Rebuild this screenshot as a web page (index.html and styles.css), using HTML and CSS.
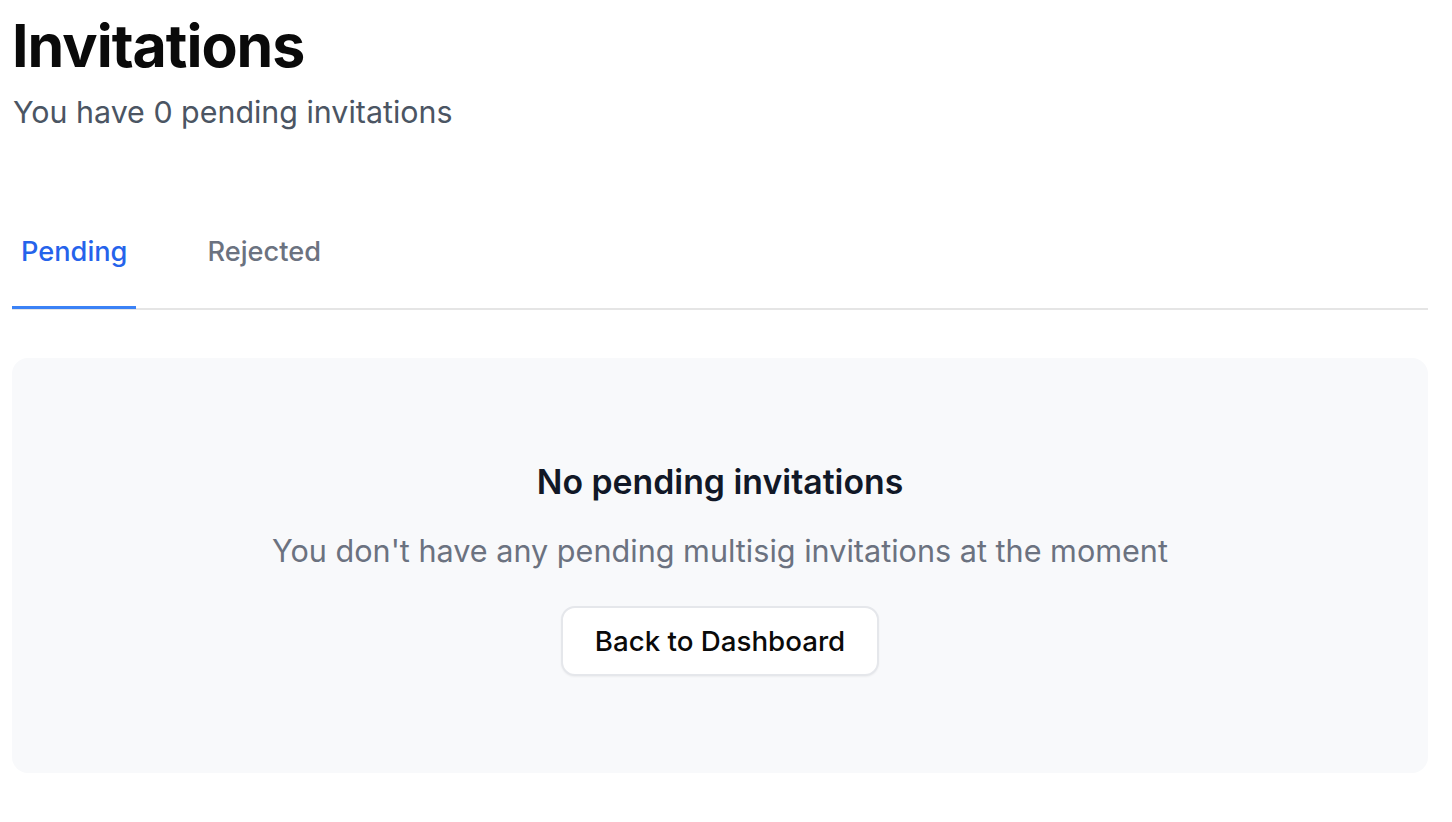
FILE: index.html
```html
<!DOCTYPE html>
<html lang="en">
<head>
<meta charset="utf-8">
<title>Invitations</title>
<link rel="stylesheet" href="styles.css">
</head>
<body>
<main class="page">
  <header class="page-header">
    <h1 class="title">Invitations</h1>
    <p class="subtitle">You have 0 pending invitations</p>
  </header>
  <nav class="tabs">
    <button class="tab tab-active">Pending</button>
    <button class="tab">Rejected</button>
  </nav>
  <section class="empty">
    <h2 class="empty-title">No pending invitations</h2>
    <p class="empty-text">You don't have any pending multisig invitations at the moment</p>
    <button class="btn">Back to Dashboard</button>
  </section>
</main>
</body>
</html>
```
FILE: styles.css
```css
* { box-sizing: border-box; }
html, body { margin: 0; padding: 0; background: #ffffff; }
body { font-family: Inter, "Noto Sans", sans-serif; color: #0a0a0a; }
.page { padding: 0 24px 0 12px; }
.page-header { padding-top: 14px; }
.title { margin: 0; font-size: 59px; font-weight: 700; line-height: 64px; letter-spacing: -1px; color: #0a0a0a; }
.subtitle { margin: 14px 0 0 1px; font-size: 30.4px; line-height: 40px; color: #4b5563; }
.tabs { display: flex; margin-top: 100px; border-bottom: 2px solid #e5e5e5; }
.tab { background: none; border: none; font-family: inherit; font-size: 27.2px; font-weight: 500; color: #6b7280; padding: 0 9px 34px; margin-right: 62px; border-bottom: 3px solid transparent; margin-bottom: -1px; line-height: 40px; cursor: pointer; }
.tab-active { color: #2563eb; border-bottom-color: #3b82f6; }
.empty { margin-top: 48px; background: #f8f9fb; border-radius: 16px; height: 415px; display: flex; flex-direction: column; align-items: center; padding-top: 102px; }
.empty-title { margin: 0; font-size: 33.8px; font-weight: 600; color: #111827; line-height: 44px; }
.empty-text { margin: 27px 0 0; font-size: 30.6px; color: #6b7280; line-height: 40px; }
.btn { margin-top: 35px; background: #fff; border: 2px solid #e5e7eb; border-radius: 14px; font-family: inherit; font-size: 27.7px; font-weight: 500; color: #0a0a0a; padding: 0 32px; height: 70px; box-shadow: 0 1px 2px rgba(0,0,0,0.05); }
```
